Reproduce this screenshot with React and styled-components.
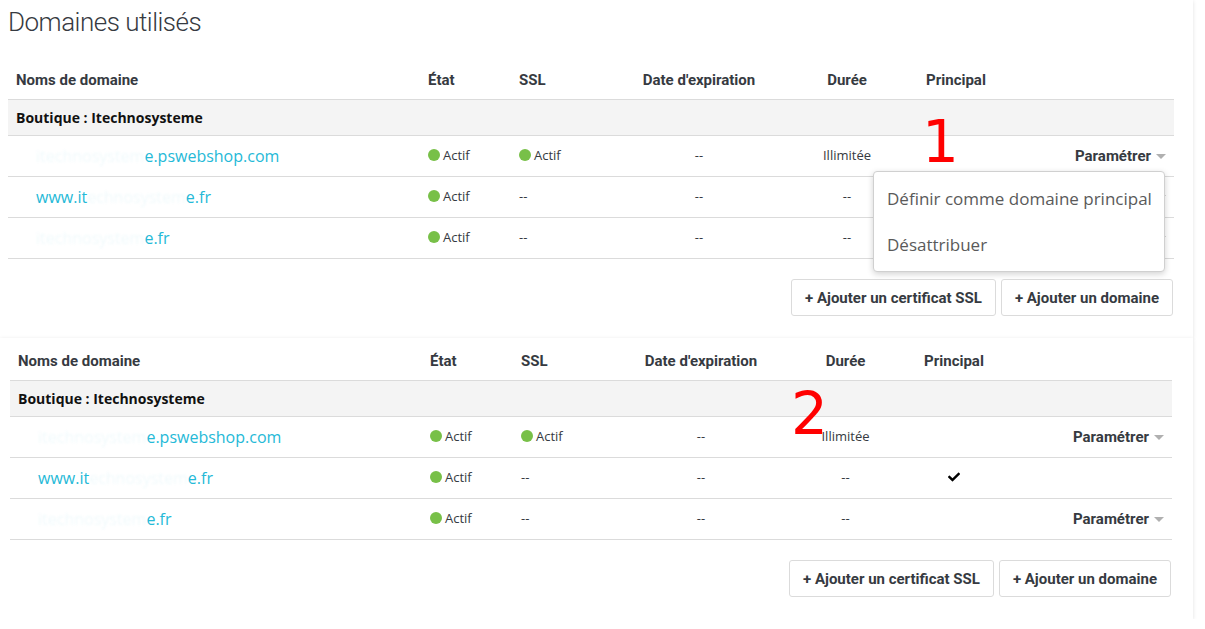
import styled, { createGlobalStyle } from "styled-components"
import { FaCheck } from "react-icons/fa"

const GlobalStyle = createGlobalStyle`
  body {
    margin: 0;
    background: #fff;
    font-family: "Open Sans", sans-serif;
    color: #363a41;
  }
`

const Page = styled.div`
  width: 1205px;
  display: flex;
  flex-direction: column;
`

const Panel = styled.section`
  position: relative;
  width: 1193px;
  box-sizing: border-box;
  background: #fff;
  box-shadow: 0 1px 4px rgba(0, 0, 0, 0.12);
  padding: ${(p) => p.$pad};
`

const Title = styled.h2`
  margin: 0 0 22px;
  font-family: Roboto, sans-serif;
  font-weight: 300;
  font-size: 26px;
  letter-spacing: -0.5px;
  line-height: 32px;
  color: #363a41;
`

const Row = styled.div`
  display: grid;
  grid-template-columns: ${(p) => p.$cols};
  height: ${(p) => p.$h}px;
  box-sizing: border-box;
  border-bottom: 1px solid #dbdbdb;
  background: ${(p) => p.$bg || "transparent"};
`

const Cell = styled.div`
  position: relative;
  display: flex;
  align-items: center;
  justify-content: ${(p) => p.$align || "flex-start"};
  padding: 0 8px 2px;
  font-size: 13px;
  color: #363a41;
  white-space: nowrap;
`

const HeadCell = styled(Cell)`
  padding-bottom: 0;
  font-family: Roboto, sans-serif;
  font-weight: 700;
  font-size: 15px;
`

const GroupCell = styled(Cell)`
  grid-column: 1 / -1;
  padding-bottom: 0;
  font-weight: 700;
  font-size: 14px;
  color: #111;
`

const DomainCell = styled(Cell)`
  padding-left: 28px;
  padding-bottom: 0;
  font-size: 16px;
  color: #25b9d7;
`

const Masked = styled.span`
  color: rgba(37, 185, 215, 0.07);
  filter: blur(1.2px);
`

const Status = styled.span`
  display: inline-flex;
  align-items: center;
  gap: 3px;
`

const Dot = styled.span`
  width: 12px;
  height: 12px;
  border-radius: 50%;
  background: #78c048;
`

const Setting = styled.span`
  display: inline-flex;
  align-items: center;
  gap: 5px;
  margin-top: 2px;
  font-family: Roboto, sans-serif;
  font-weight: 700;
  font-size: 15px;
  color: #363a41;
`

const Caret = styled.span`
  width: 0;
  height: 0;
  border-left: 5px solid transparent;
  border-right: 5px solid transparent;
  border-top: 5px solid #b0b0b0;
`

const Menu = styled.div`
  position: absolute;
  top: 35px;
  right: 9px;
  z-index: 2;
  width: 292px;
  box-sizing: border-box;
  padding: 4px 0 3px;
  background: #fff;
  border: 1px solid #d0d0d0;
  border-radius: 4px;
  box-shadow: 0 2px 6px rgba(0, 0, 0, 0.18);
`

const MenuItem = styled.div`
  height: 46px;
  line-height: 46px;
  padding: 0 13px;
  font-size: 17px;
  color: #5a5a5a;
`

const Footer = styled.div`
  display: flex;
  justify-content: flex-end;
  gap: 5px;
  margin-top: 20px;
  padding-right: ${(p) => p.$right || 0}px;
`

const Button = styled.button`
  height: 37px;
  padding: 0 13px;
  border: 1px solid #dbdbdb;
  border-radius: 3px;
  background: #fff;
  font-family: Roboto, sans-serif;
  font-weight: 700;
  font-size: 15px;
  color: #363a41;
`

const Mark = styled.span`
  position: absolute;
  top: ${(p) => p.$top}px;
  left: ${(p) => p.$left}px;
  font-family: "DejaVu Sans", sans-serif;
  font-size: 58px;
  line-height: 1;
  color: #ff0000;
`

const domains = [
  { hidden: "itechnosystem", shown: "e.pswebshop.com" },
  { pre: "www.it", hidden: "echnosystem", shown: "e.fr" },
  { hidden: "itechnosystem", shown: "e.fr" },
]

const Domain = ({ d }) => (
  <DomainCell>
    {d.pre}
    <Masked>{d.hidden}</Masked>
    {d.shown}
  </DomainCell>
)

const DomainTable = ({ cols, rows }) => (
  <div>
    <Row $cols={cols} $h={40}>
      <HeadCell>Noms de domaine</HeadCell>
      <HeadCell>État</HeadCell>
      <HeadCell>SSL</HeadCell>
      <HeadCell $align="center">Date d'expiration</HeadCell>
      <HeadCell $align="center">Durée</HeadCell>
      <HeadCell $align="center">Principal</HeadCell>
      <HeadCell />
    </Row>
    <Row $cols={cols} $h={36} $bg="#f4f4f4">
      <GroupCell>Boutique : Itechnosysteme</GroupCell>
    </Row>
    {rows.map((r, i) => (
      <Row key={i} $cols={cols} $h={41}>
        <Domain d={domains[i]} />
        <Cell>
          <Status>
            <Dot />
            Actif
          </Status>
        </Cell>
        <Cell>
          {r.ssl ? (
            <Status>
              <Dot />
              Actif
            </Status>
          ) : (
            "--"
          )}
        </Cell>
        <Cell $align="center">--</Cell>
        <Cell $align="center">{r.duree}</Cell>
        <Cell $align="center">{r.principal && <FaCheck size={12} color="#000" />}</Cell>
        <Cell $align="flex-end">
          {r.setting && (
            <Setting>
              Paramétrer
              <Caret />
            </Setting>
          )}
          {r.menu && (
            <Menu>
              <MenuItem>Définir comme domaine principal</MenuItem>
              <MenuItem>Désattribuer</MenuItem>
            </Menu>
          )}
        </Cell>
      </Row>
    ))}
  </div>
)

const Actions = ({ right }) => (
  <Footer $right={right}>
    <Button>+ Ajouter un certificat SSL</Button>
    <Button>+ Ajouter un domaine</Button>
  </Footer>
)

const firstRows = [
  { ssl: true, duree: "Illimitée", setting: true, menu: true },
  { duree: "--", setting: true },
  { duree: "--", setting: true },
]

const secondRows = [
  { ssl: true, duree: "Illimitée", setting: true },
  { duree: "--", principal: true },
  { duree: "--", setting: true },
]

export default function App() {
  return (
    <Page>
      <GlobalStyle />
      <Panel $pad="6px 19px 22px 8px">
        <Title>Domaines utilisés</Title>
        <DomainTable cols="412px 91px 100px 176px 120px 98px 169px" rows={firstRows} />
        <Actions right={1} />
        <Mark $top={113} $left={922}>1</Mark>
      </Panel>
      <Panel $pad="3px 21px 22px 10px">
        <DomainTable cols="412px 91px 100px 176px 113px 104px 166px" rows={secondRows} />
        <Actions right={1} />
        <Mark $top={47} $left={791}>2</Mark>
      </Panel>
    </Page>
  )
}
